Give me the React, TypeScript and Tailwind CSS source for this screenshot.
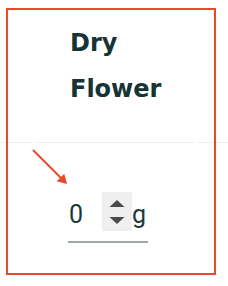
import React from "react";

export default function App() {
  return (
    <div className="relative w-[228px] h-[286px] bg-white overflow-hidden">
      <div className="pt-[20px] pl-[70px]">
        <div className="font-['DejaVu_Sans',sans-serif] font-bold text-[24px] leading-[46px] text-[#163434]">
          Dry
          <br />
          Flower
        </div>
      </div>
      <div className="mt-[30px] flex gap-[4px]">
        <div className="w-[32px] h-px bg-[#ececf3]" />
        <div className="flex-1 h-px bg-[#ececf3]" />
        <div className="w-[30px] h-px bg-[#ececf3]" />
      </div>
      <div className="mt-[49px] ml-[68px] w-[80px] h-[51px] border-b-2 border-[#a0aaaa] flex items-start font-['Roboto',sans-serif] text-[25px] text-[#1d3a3a]">
        <span className="flex-1 mt-[7px] pl-[1px] leading-[32px]">0</span>
        <div className="w-[30px] h-[39px] bg-[#efefef] flex flex-col items-center justify-center gap-[10px]">
          <svg width="16" height="7" viewBox="0 0 16 7">
            <polygon points="8,0 15.5,7 0.5,7" fill="#4a4a4a" />
          </svg>
          <svg width="16" height="7" viewBox="0 0 16 7">
            <polygon points="0.5,0 15.5,0 8,7" fill="#4a4a4a" />
          </svg>
        </div>
        <span className="w-[16px] mt-[7px] leading-[32px]">g</span>
      </div>
      <div className="absolute left-[6px] top-[8px] w-[210px] h-[267px] border-2 border-[#e9492b]" />
      <svg className="absolute left-0 top-0" width="228" height="286" viewBox="0 0 228 286">
        <line x1="33" y1="150" x2="61" y2="178" stroke="#ea4a2b" strokeWidth="2" />
        <polygon points="67,184 64.3,173.7 56.7,181.3" fill="#ea4a2b" />
      </svg>
    </div>
  );
}
